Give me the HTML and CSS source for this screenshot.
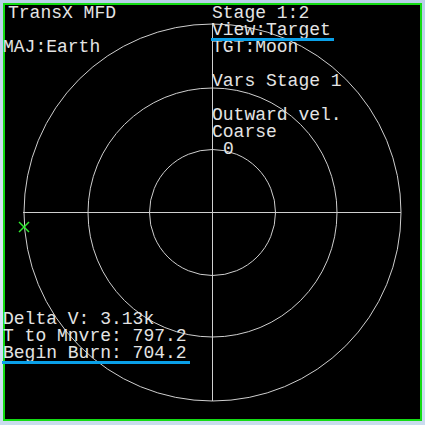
FILE: index.html
```html
<!DOCTYPE html>
<html>
<head>
<meta charset="utf-8">
<link rel="stylesheet" href="styles.css">
</head>
<body>
<div class="mfd">
  <svg class="plot" viewBox="0 0 425 425" width="425" height="425">
    <circle cx="212.5" cy="212.5" r="188.5" />
    <circle cx="212.5" cy="212.5" r="124.5" />
    <circle cx="212.5" cy="212.5" r="63" />
    <line x1="23" y1="212.5" x2="401" y2="212.5" />
    <line x1="212.5" y1="23" x2="212.5" y2="401" />
    <g class="mark">
      <line x1="19" y1="222" x2="29" y2="232" />
      <line x1="29" y1="222" x2="19" y2="232" />
    </g>
  </svg>
  <div class="top">
    <div class="col-left">
      <div class="line title">TransX MFD</div>
      <div class="line blank">&nbsp;</div>
      <div class="line shift">MAJ:Earth</div>
    </div>
    <div class="col-right">
      <div class="line">Stage 1:2</div>
      <div class="line"><span class="sel">View:Target</span></div>
      <div class="line">TGT:Moon</div>
      <div class="line blank">&nbsp;</div>
      <div class="line">Vars Stage 1</div>
      <div class="line blank">&nbsp;</div>
      <div class="line">Outward vel.</div>
      <div class="line">Coarse</div>
      <div class="line indent">0</div>
    </div>
  </div>
  <div class="bottom">
    <div class="line">Delta V: 3.13k</div>
    <div class="line">T to Mnvre: 797.2</div>
    <div class="line"><span class="sel">Begin Burn: 704.2</span></div>
  </div>
</div>
</body>
</html>
```
FILE: styles.css
```css
html, body {
  margin: 0;
  padding: 0;
}
body {
  width: 425px;
  height: 425px;
  background: linear-gradient(180deg, #b9d0e8 0%, #dbe8f4 60%, #c9dcee 100%);
  position: relative;
  overflow: hidden;
}
.mfd {
  position: relative;
  margin: 3px 0 0 3px;
  width: 415px;
  height: 414px;
  border: 2px solid #14dc14;
  background: #000;
  display: flex;
  flex-direction: column;
  font-family: "Liberation Mono", "Courier New", monospace;
  font-size: 18px;
  line-height: 17px;
  color: #e4e4e4;
}
.line {
  white-space: pre;
  height: 17px;
}
.plot {
  position: absolute;
  left: -5px;
  top: -5px;
  fill: none;
  stroke: #cfcfcf;
  stroke-width: 1;
}
.plot .mark line {
  stroke: #30ee30;
  stroke-width: 1.4;
}
.top {
  position: relative;
  display: grid;
  grid-template-columns: 207px 1fr;
}
.title {
  margin-left: 3px;
}
.shift {
  margin-left: -2px;
}
.indent {
  padding-left: 11px;
}
.sel {
  position: relative;
}
.sel::after {
  content: "";
  position: absolute;
  left: -1px;
  right: -3px;
  bottom: -1px;
  height: 3px;
  background: #0aa0e8;
}
.bottom {
  position: relative;
  margin-top: auto;
  margin-bottom: 57px;
  margin-left: -2px;
}
```
